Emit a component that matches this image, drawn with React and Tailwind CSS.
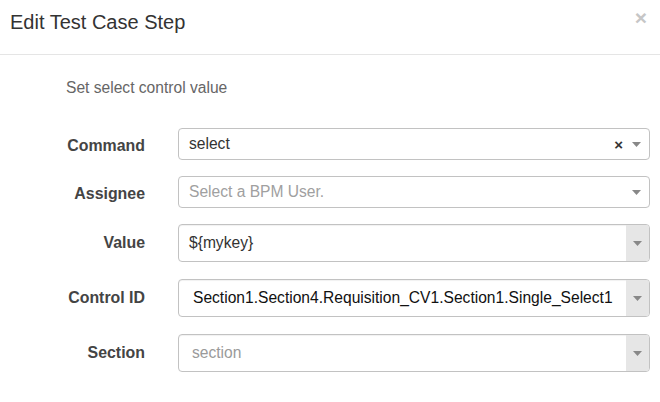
import React from 'react';

const font = { fontFamily: '"Liberation Sans", Arial, sans-serif' };

function Arrow() {
  return (
    <svg width="9" height="5" viewBox="0 0 9 5" className="shrink-0">
      <path d="M0 0 L9 0 L4.5 5 Z" fill="#888" />
    </svg>
  );
}

function Row({ label, children, height, mt, labelPad = '' }) {
  return (
    <div className={`flex items-center ${mt}`}>
      <div className={`w-[145px] text-right font-bold text-[15.9px] text-[#444] ${labelPad}`}>{label}</div>
      <div className={`ml-[33px] w-[472px] ${height}`}>{children}</div>
    </div>
  );
}

function Combo({ value, placeholder, dark, pad = 'pl-[12px]' }) {
  return (
    <div className="flex h-full border border-[#c2c2c2] rounded-[4px] overflow-hidden shadow-[inset_0_1px_1px_rgba(0,0,0,0.06)]">
      <div className={`flex-1 flex items-center ${pad} text-[15.6px] ${value ? (dark ? 'text-[#111]' : 'text-[#333]') : 'text-[#9a9a9a]'}`}>
        {value || placeholder}
      </div>
      <div className="w-[23px] bg-[#e6e6e6] flex items-center justify-center">
        <Arrow />
      </div>
    </div>
  );
}

export default function App() {
  return (
    <div className="w-[660px] h-[402px] bg-white overflow-hidden" style={font}>
      <div className="h-[55px] border-b border-[#e5e5e5] flex items-start justify-between pl-[10px] pr-[13px] pt-[10px]">
        <h4 className="text-[20px] leading-6 text-[#333]">Edit Test Case Step</h4>
        <span className="text-[21px] font-bold leading-[14px] text-[#c6c6c6] mt-[1px]">×</span>
      </div>
      <div className="pt-[23px]">
        <p className="pl-[66px] text-[15.6px] leading-5 text-[#666]">Set select control value</p>
        <Row label="Command" height="h-[32px]" mt="mt-[30px]" labelPad="pt-[3px]">
          <div className="flex items-center h-full border border-[#c2c2c2] rounded-[4px] pl-[10px] pr-[8px]">
            <span className="flex-1 text-[15.6px] text-[#333]">select</span>
            <span className="text-[15px] font-bold text-[#333] leading-none mr-[9px]">×</span>
            <Arrow />
          </div>
        </Row>
        <Row label="Assignee" height="h-[32px]" mt="mt-[16px]" labelPad="pt-[4px]">
          <div className="flex items-center h-full border border-[#c2c2c2] rounded-[4px] pl-[10px] pr-[8px]">
            <span className="flex-1 text-[15.6px] text-[#a0a0a0]">Select a BPM User.</span>
            <Arrow />
          </div>
        </Row>
        <Row label="Value" height="h-[38px]" mt="mt-[16px]">
          <Combo value="${mykey}" pad="pl-[10px]" />
        </Row>
        <Row label="Control ID" height="h-[38px]" mt="mt-[17px]" labelPad="-mt-[1px]">
          <Combo value="Section1.Section4.Requisition_CV1.Section1.Single_Select1" dark pad="pl-[14px]" />
        </Row>
        <Row label="Section" height="h-[38px]" mt="mt-[17px]">
          <Combo placeholder="section" pad="pl-[13px]" />
        </Row>
      </div>
    </div>
  );
}
